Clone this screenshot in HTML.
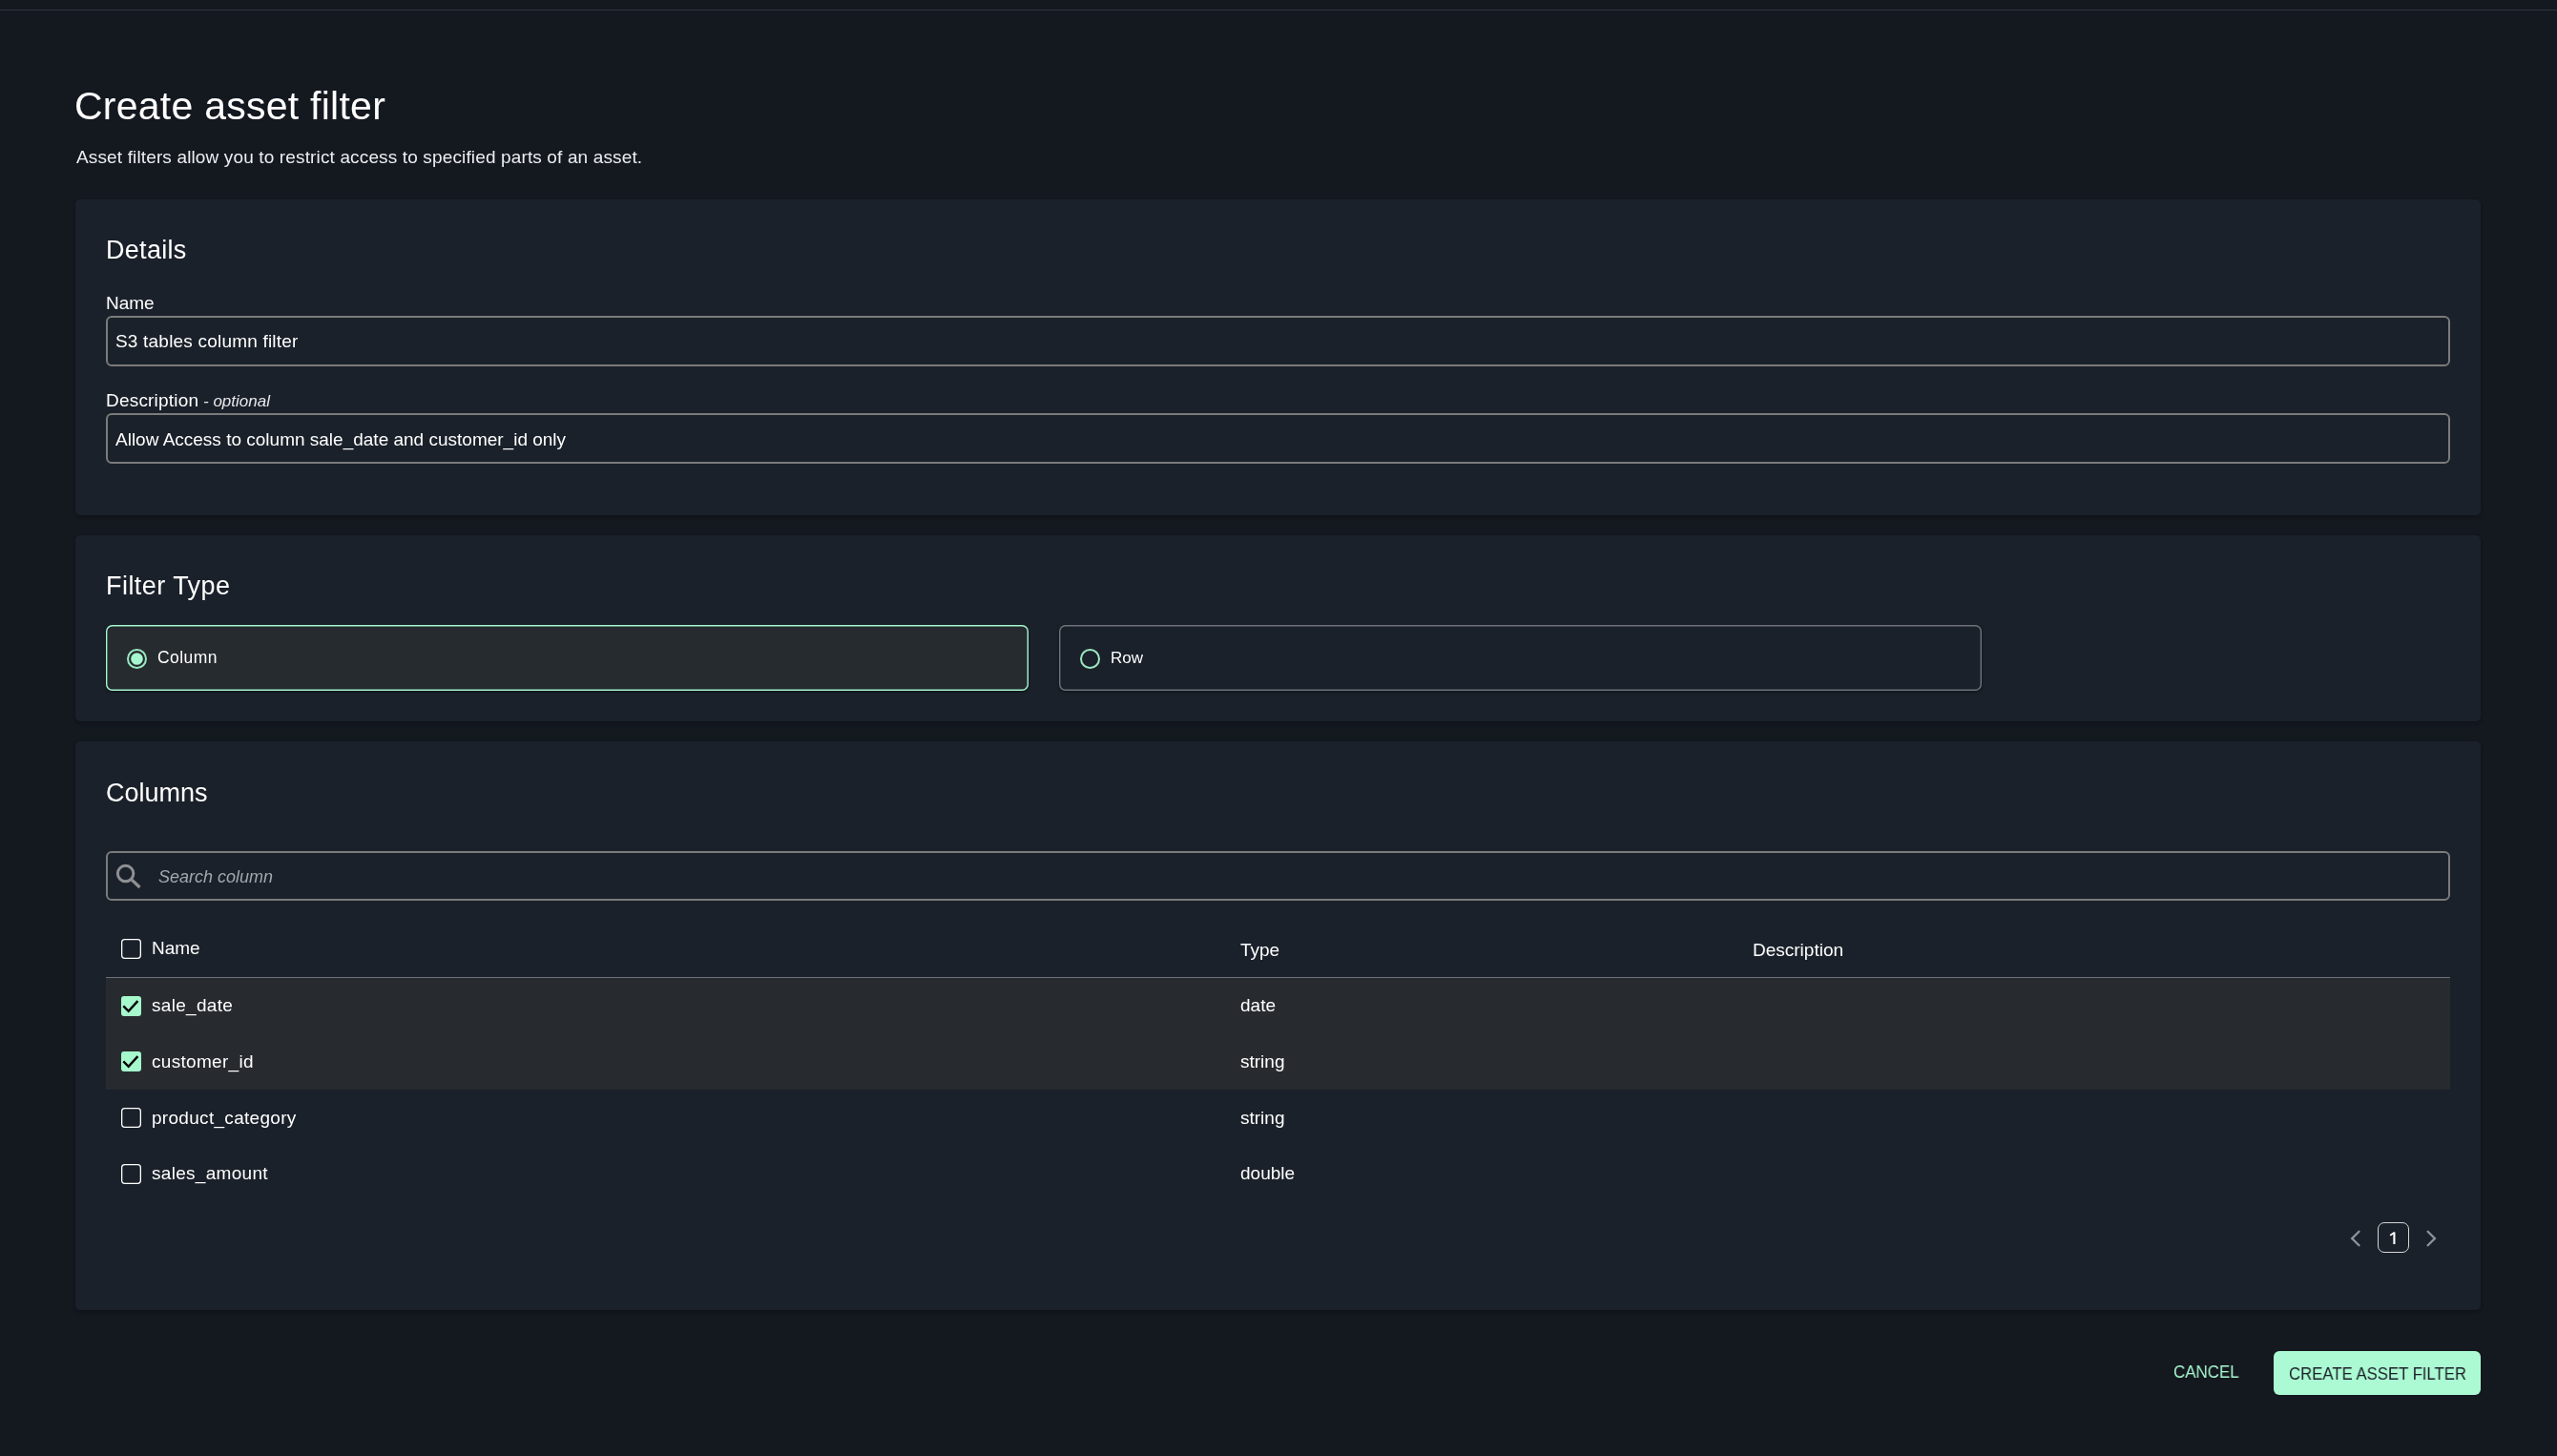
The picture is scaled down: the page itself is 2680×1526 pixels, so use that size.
<!DOCTYPE html>
<html><head><meta charset="utf-8"><title>Create asset filter</title>
<style>
html,body{margin:0;padding:0;}
body{width:2680px;height:1526px;background:#14181f;font-family:"Liberation Sans", sans-serif;position:relative;overflow:hidden;}
</style></head><body>
<div style="position:absolute;left:0px;top:10px;width:2680px;height:1px;background:#2f333d;border-radius:0px;"></div>
<div style="position:absolute;left:78px;top:70px;font-size:41px;line-height:82px;font-style:normal;letter-spacing:0.25px;color:#ffffff;white-space:nowrap;will-change:transform;">Create asset filter</div>
<div style="position:absolute;left:80px;top:146px;font-size:19px;line-height:38px;font-style:normal;letter-spacing:0.14px;color:#eceef0;white-space:nowrap;will-change:transform;">Asset filters allow you to restrict access to specified parts of an asset.</div>
<div style="position:absolute;left:79px;top:209px;width:2521px;height:331px;background:#1b212a;border-radius:5px;box-shadow:0 2px 4px -1px rgba(0,0,0,0.35);"></div>
<div style="position:absolute;left:111px;top:235px;font-size:27px;line-height:54px;font-style:normal;letter-spacing:0.3px;color:#ffffff;white-space:nowrap;will-change:transform;">Details</div>
<div style="position:absolute;left:111px;top:299px;font-size:19px;line-height:38px;font-style:normal;letter-spacing:0px;color:#ffffff;white-space:nowrap;will-change:transform;">Name</div>
<div style="position:absolute;left:111px;top:331px;width:2457px;height:53px;background:#1b212a;border:2px solid #7b7b7b;box-sizing:border-box;border-radius:6px;"></div>
<div style="position:absolute;left:121px;top:339px;font-size:19px;line-height:38px;font-style:normal;letter-spacing:0.2px;color:#ffffff;white-space:nowrap;will-change:transform;">S3 tables column filter</div>
<div style="position:absolute;left:111px;top:401px;font-size:19px;line-height:38px;font-style:normal;letter-spacing:0.2px;color:#ffffff;white-space:nowrap;will-change:transform;">Description</div>
<div style="position:absolute;left:213px;top:404px;font-size:17px;line-height:34px;font-style:italic;letter-spacing:0px;color:#e6e7ea;white-space:nowrap;will-change:transform;">- optional</div>
<div style="position:absolute;left:111px;top:433px;width:2457px;height:53px;background:#1b212a;border:2px solid #7b7b7b;box-sizing:border-box;border-radius:6px;"></div>
<div style="position:absolute;left:121px;top:442px;font-size:19px;line-height:38px;font-style:normal;letter-spacing:0px;color:#ffffff;white-space:nowrap;will-change:transform;">Allow Access to column sale_date and customer_id only</div>
<div style="position:absolute;left:79px;top:561px;width:2521px;height:195px;background:#1b212a;border-radius:5px;box-shadow:0 2px 4px -1px rgba(0,0,0,0.35);"></div>
<div style="position:absolute;left:111px;top:587px;font-size:27px;line-height:54px;font-style:normal;letter-spacing:0.45px;color:#ffffff;white-space:nowrap;will-change:transform;">Filter Type</div>
<div style="position:absolute;left:111px;top:655px;width:967px;height:69px;background:#262b2f;border-radius:6px;box-shadow:0 1px 3px rgba(0,0,0,0.45);"></div>
<svg style="position:absolute;left:111px;top:655px;" width="967" height="69" viewBox="0 0 967 69"><rect x="0.7" y="0.7" width="965.6" height="67.6" rx="6" fill="none" stroke="#a4f6cf" stroke-width="1.4"/></svg>
<div style="position:absolute;left:133px;top:680px;width:21px;height:21px;background:transparent;border:2px solid #9be8c2;box-sizing:border-box;border-radius:11px;"></div>
<svg style="position:absolute;left:133px;top:680px" width="21" height="21" viewBox="0 0 21 21"><circle cx="10.5" cy="10.5" r="6.3" fill="#a6f8cf"/></svg>
<div style="position:absolute;left:165px;top:672px;font-size:17.5px;line-height:35.0px;font-style:normal;letter-spacing:0.45px;color:#ffffff;white-space:nowrap;will-change:transform;">Column</div>
<div style="position:absolute;left:1110px;top:655px;width:967px;height:69px;background:#1b212a;border-radius:6px;box-shadow:0 1px 3px rgba(0,0,0,0.45);"></div>
<svg style="position:absolute;left:1110px;top:655px;" width="967" height="69" viewBox="0 0 967 69"><rect x="0.7" y="0.7" width="965.6" height="67.6" rx="6" fill="none" stroke="#6f727a" stroke-width="1.4"/></svg>
<div style="position:absolute;left:1132px;top:680px;width:21px;height:21px;background:transparent;border:2px solid #9be8c2;box-sizing:border-box;border-radius:11px;"></div>
<div style="position:absolute;left:1164px;top:673px;font-size:17px;line-height:34px;font-style:normal;letter-spacing:0px;color:#ffffff;white-space:nowrap;will-change:transform;">Row</div>
<div style="position:absolute;left:79px;top:777px;width:2521px;height:596px;background:#1b212a;border-radius:5px;box-shadow:0 2px 4px -1px rgba(0,0,0,0.35);"></div>
<div style="position:absolute;left:111px;top:804px;font-size:27px;line-height:54px;font-style:normal;letter-spacing:0px;color:#ffffff;white-space:nowrap;will-change:transform;">Columns</div>
<div style="position:absolute;left:111px;top:892px;width:2457px;height:52px;background:#1b212a;border:2px solid #7b7b7b;box-sizing:border-box;border-radius:6px;"></div>
<svg style="position:absolute;left:118px;top:902px" width="34" height="34" viewBox="0 0 34 34"><circle cx="13.6" cy="13.6" r="8.25" fill="none" stroke="#8e9094" stroke-width="3"/><line x1="19.6" y1="19.6" x2="28.5" y2="28" stroke="#8e9094" stroke-width="3.3"/></svg>
<div style="position:absolute;left:166px;top:901px;font-size:18px;line-height:36px;font-style:italic;letter-spacing:0px;color:#a3a7ae;white-space:nowrap;will-change:transform;">Search column</div>
<svg style="position:absolute;left:127px;top:984px" width="21" height="21" viewBox="0 0 21 21"><rect x="0.65" y="0.65" width="19.7" height="19.7" rx="3" fill="none" stroke="#ffffff" stroke-width="1.3"/></svg>
<div style="position:absolute;left:159px;top:975px;font-size:19px;line-height:38px;font-style:normal;letter-spacing:0px;color:#ffffff;white-space:nowrap;will-change:transform;">Name</div>
<div style="position:absolute;left:1300px;top:977px;font-size:19px;line-height:38px;font-style:normal;letter-spacing:0px;color:#ffffff;white-space:nowrap;will-change:transform;">Type</div>
<div style="position:absolute;left:1837px;top:977px;font-size:19px;line-height:38px;font-style:normal;letter-spacing:0px;color:#ffffff;white-space:nowrap;will-change:transform;">Description</div>
<div style="position:absolute;left:111px;top:1024px;width:2457px;height:1px;background:#6c7079;border-radius:0px;"></div>
<div style="position:absolute;left:111px;top:1025px;width:2457px;height:117px;background:#272b2f;border-radius:0px;"></div>
<svg style="position:absolute;left:127px;top:1044px" width="21" height="21" viewBox="0 0 21 21"><rect x="0" y="0" width="21" height="21" rx="3" fill="#a6f8cd"/><path d="M2.3 10.4 L7.7 15.8 L17.4 5.1" fill="none" stroke="#000" stroke-width="2.4"/></svg>
<div style="position:absolute;left:159px;top:1035px;font-size:19px;line-height:38px;font-style:normal;letter-spacing:0.3px;color:#ffffff;white-space:nowrap;will-change:transform;">sale_date</div>
<div style="position:absolute;left:1300px;top:1035px;font-size:19px;line-height:38px;font-style:normal;letter-spacing:0px;color:#ffffff;white-space:nowrap;will-change:transform;">date</div>
<svg style="position:absolute;left:127px;top:1102px" width="21" height="21" viewBox="0 0 21 21"><rect x="0" y="0" width="21" height="21" rx="3" fill="#a6f8cd"/><path d="M2.3 10.4 L7.7 15.8 L17.4 5.1" fill="none" stroke="#000" stroke-width="2.4"/></svg>
<div style="position:absolute;left:159px;top:1094px;font-size:19px;line-height:38px;font-style:normal;letter-spacing:0.3px;color:#ffffff;white-space:nowrap;will-change:transform;">customer_id</div>
<div style="position:absolute;left:1300px;top:1094px;font-size:19px;line-height:38px;font-style:normal;letter-spacing:0px;color:#ffffff;white-space:nowrap;will-change:transform;">string</div>
<svg style="position:absolute;left:127px;top:1161px" width="21" height="21" viewBox="0 0 21 21"><rect x="0.65" y="0.65" width="19.7" height="19.7" rx="3" fill="none" stroke="#ffffff" stroke-width="1.3"/></svg>
<div style="position:absolute;left:159px;top:1153px;font-size:19px;line-height:38px;font-style:normal;letter-spacing:0.3px;color:#ffffff;white-space:nowrap;will-change:transform;">product_category</div>
<div style="position:absolute;left:1300px;top:1153px;font-size:19px;line-height:38px;font-style:normal;letter-spacing:0px;color:#ffffff;white-space:nowrap;will-change:transform;">string</div>
<svg style="position:absolute;left:127px;top:1220px" width="21" height="21" viewBox="0 0 21 21"><rect x="0.65" y="0.65" width="19.7" height="19.7" rx="3" fill="none" stroke="#ffffff" stroke-width="1.3"/></svg>
<div style="position:absolute;left:159px;top:1211px;font-size:19px;line-height:38px;font-style:normal;letter-spacing:0.3px;color:#ffffff;white-space:nowrap;will-change:transform;">sales_amount</div>
<div style="position:absolute;left:1300px;top:1211px;font-size:19px;line-height:38px;font-style:normal;letter-spacing:0px;color:#ffffff;white-space:nowrap;will-change:transform;">double</div>
<svg style="position:absolute;left:2460px;top:1286px" width="100" height="24" viewBox="0 0 100 24"><path d="M12.5 4.8 L5.2 12 L12.5 19.2" fill="none" stroke="#8a969c" stroke-width="2.3" stroke-linecap="round"/><path d="M84.6 4.8 L91.9 12 L84.6 19.2" fill="none" stroke="#8a969c" stroke-width="2.3" stroke-linecap="round"/></svg>
<div style="position:absolute;left:2492px;top:1281px;width:33px;height:32px;background:transparent;border:1.5px solid #d6d6d6;box-sizing:border-box;border-radius:7px;"></div>
<svg style="position:absolute;left:2500px;top:1285px" width="20" height="24" viewBox="0 0 20 24"><rect x="8.35" y="6.4" width="2.1" height="12.6" fill="#fff"/><path d="M9.4 7.1 L5.1 9.7" stroke="#fff" stroke-width="1.8" fill="none"/></svg>
<div style="position:absolute;left:2278px;top:1420px;font-size:18px;line-height:36px;font-style:normal;letter-spacing:0px;color:#a8f7cf;white-space:nowrap;will-change:transform;transform:scaleX(0.94);transform-origin:0 0;">CANCEL</div>
<div style="position:absolute;left:2383px;top:1416px;width:217px;height:46px;background:#abfad3;border-radius:6px;"></div>
<div style="position:absolute;left:2399px;top:1422px;font-size:18px;line-height:36px;font-style:normal;letter-spacing:0px;color:#1b1f27;white-space:nowrap;will-change:transform;transform:scaleX(0.93);transform-origin:0 0;">CREATE ASSET FILTER</div>
</body></html>
